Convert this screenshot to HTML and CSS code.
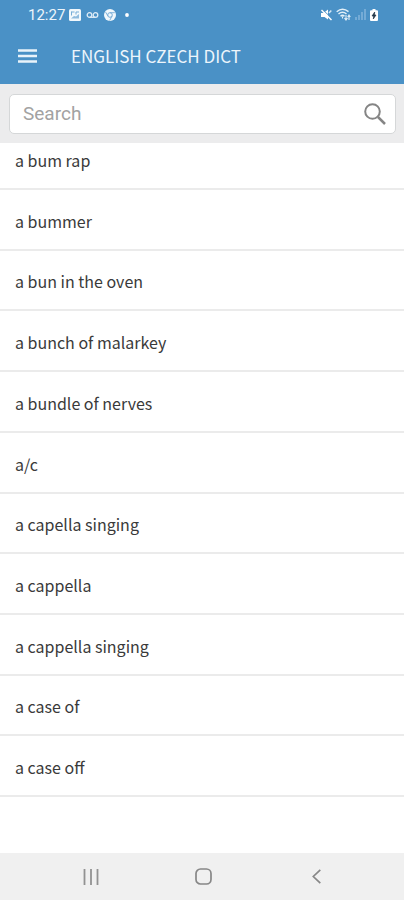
FILE: index.html
```
<!DOCTYPE html>
<html lang="en">
<head>
<meta charset="utf-8">
<meta name="viewport" content="width=device-width, initial-scale=1">
<title>English Czech Dict</title>
<link rel="stylesheet" href="styles.css">
</head>
<body>
<header class="top">
  <div class="status">
    <span class="clock">12:27</span>
    <svg class="s-picture" width="12" height="12" viewBox="0 0 12 12"><rect width="12" height="12" rx="1.500" fill="#f2f8fc"/><path d="M2.500 2.500v4M2.500 3h3M7 3h3M7 3v2.500" stroke="#77add7" stroke-width="1"/><path d="M2 9.500l3-2.500 2 .5 3-2.500v4.500z" fill="#8fbbde"/></svg>
    <svg class="s-voice" width="13" height="8" viewBox="0 0 13 8" fill="none" stroke="#dcebf6" stroke-width="1.300"><circle cx="3.500" cy="4" r="2.300"/><circle cx="9.500" cy="4" r="2.300"/><path d="M3.500 6.300h6"/></svg>
    <svg class="s-chrome" width="12" height="12" viewBox="0 0 12 12"><circle cx="6" cy="6" r="6" fill="#f2f8fc"/><circle cx="6" cy="6" r="2.300" fill="none" stroke="#77add7"/><path d="M6 3.700h4.800M4 7.100L1.600 3.100M8 7.100l-2.300 4.400" stroke="#77add7" stroke-width=".9"/></svg>
    <svg class="s-dot" width="4" height="4" viewBox="0 0 4 4"><circle cx="2" cy="2" r="1.900" fill="#fff"/></svg>
    <span class="spacer"></span>
    <svg width="11" height="12" viewBox="0 0 11 12"><path d="M0 4h2.500L7 .5v10L3.500 8H0z" fill="#fff"/><path d="M8 4l2.300-2.500" stroke="#d5e7f4" stroke-width="1.500"/><path d="M1.500 .5l9.500 9" stroke="#4a91c6" stroke-width="1"/><path d="M.5 1l10 10" stroke="#fff" stroke-width="1.500"/></svg>
    <svg class="s-wifi" width="15" height="13" viewBox="0 0 15 13" fill="none" stroke="#e2eff8" stroke-width="1.500"><path d="M.7 3.700Q6.500-1.200 12.500 3.700M2.500 6Q6.500 2.600 10.500 6M4.500 8.200q2-1.700 4 0"/><path d="M6.500 8.500v2M10 7v4.500M8.500 10l1.500 2 1.500-2M13 12V7.500M11.700 9L13 7l1.300 2" stroke-width="1.100"/></svg>
    <svg class="s-signal" width="11" height="11" viewBox="0 0 11 11" fill="#74abd6"><path d="M0 8h2v3H0zM3 6h2v5H3zM6 3h2v8H6zM9 0h2v11H9z"/></svg>
    <svg class="s-battery" width="8" height="12" viewBox="0 0 8 12"><path d="M2.500 0h3v1.200H7q1 0 1 1V11q0 1-1 1H1q-1 0-1-1V2.200q0-1 1-1h1.500z" fill="#fff"/><path d="M4.700 3L2 7h1.700L3.300 10 6 6H4.400z" fill="#24384a" stroke="#24384a" stroke-width=".7"/></svg>
  </div>
  <div class="bar">
    <button class="menu" type="button" aria-label="Menu"><svg width="19" height="14" viewBox="0 0 19 14" stroke="#e9f3fa" stroke-width="2.400"><path d="M0 1.500h19M0 7h19M0 12.500h19"/></svg></button>
    <h1>ENGLISH CZECH DICT</h1>
  </div>
</header>
<form class="search">
  <div class="field">
    <input type="text" placeholder="Search" aria-label="Search">
    <button type="submit" aria-label="Search"><svg width="22" height="22" viewBox="0 0 22 22" fill="none" stroke="#858585" stroke-width="2"><circle cx="8.500" cy="8.500" r="7.300"/><path d="M14 14l7 7" stroke-width="2.500"/></svg></button>
  </div>
</form>
<main>
  <ul class="words">
    <li>a bum rap</li>
    <li>a bummer</li>
    <li>a bun in the oven</li>
    <li>a bunch of malarkey</li>
    <li>a bundle of nerves</li>
    <li>a/c</li>
    <li>a capella singing</li>
    <li>a cappella</li>
    <li>a cappella singing</li>
    <li>a case of</li>
    <li>a case off</li>
  </ul>
</main>
<nav class="keys">
  <button type="button" aria-label="Recent apps"><svg width="16" height="16" viewBox="0 0 16 16" stroke="#929292" stroke-width="1.800"><path d="M1.500 0v16M8 0v16M14.500 0v16"/></svg></button>
  <button type="button" aria-label="Home"><svg width="17" height="17" viewBox="0 0 17 17" fill="none" stroke="#878787" stroke-width="1.700"><rect x="1" y="1" width="15" height="15" rx="4.500"/></svg></button>
  <button type="button" aria-label="Back"><svg width="9" height="15" viewBox="0 0 9 15" fill="none" stroke="#878787" stroke-width="1.700"><path d="M8.300.8L1.300 7.500l7 6.700"/></svg></button>
</nav>
</body>
</html>
```
FILE: styles.css
```
* {
  box-sizing: border-box;
}

body {
  margin: 0;
  min-height: 100vh;
  display: flex;
  flex-direction: column;
  background: #fff;
  color: #3a3a3a;
  font-family: "Noto Sans CJK JP", "Noto Sans", sans-serif;
}

button {
  display: flex;
  align-items: center;
  justify-content: center;
  padding: 0;
  border: 0;
  background: none;
}

.top {
  background: #4a91c6;
  color: #edf5fb;
}

.status {
  display: flex;
  align-items: center;
  height: 29px;
  padding: 0 26px 0 28px;
}

.clock {
  font: 15px/20px Roboto, sans-serif;
  margin-right: 4px;
}

.s-voice,
.s-chrome {
  margin-left: 5px;
}

.s-dot {
  margin-left: 9px;
}

.spacer {
  flex: 1;
}

.s-wifi,
.s-signal,
.s-battery {
  margin-left: 4px;
}

.bar {
  display: flex;
  align-items: center;
  height: 55px;
  padding: 0 18px 2px;
}

.menu {
  width: 19px;
  height: 24px;
}

h1 {
  margin: 0 0 0 34px;
  font-size: 17px;
  line-height: 24px;
  font-weight: 400;
}

.search {
  padding: 10px 8px 9px 9px;
  background: #ececed;
}

.field {
  display: flex;
  align-items: center;
  height: 40px;
  padding: 0 9px 0 13px;
  border: 1px solid #d5d7d8;
  border-radius: 5px;
  background: #fff;
}

.field input {
  flex: 1;
  min-width: 0;
  padding: 0;
  border: 0;
  outline: 0;
  background: none;
  color: #3a3a3a;
  font: 19px/24px Roboto, sans-serif;
}

.field input::placeholder {
  color: #a2a2a2;
}

main {
  flex: 1;
  display: flex;
  padding-bottom: 56px;
}

.words {
  flex: 1;
  display: grid;
  grid-template-rows: 47px;
  grid-auto-rows: 1fr;
  margin: 0;
  padding: 0;
  list-style: none;
  font-size: 16px;
  line-height: 24px;
}

.words li {
  display: flex;
  align-items: flex-end;
  padding: 4px 15px 16px;
  border-bottom: 2px solid #ebebeb;
}

.keys {
  display: flex;
  justify-content: center;
  gap: 65px;
  height: 47px;
  padding-left: 3px;
  background: #f0f0f0;
}

.keys button {
  width: 48px;
}
```
